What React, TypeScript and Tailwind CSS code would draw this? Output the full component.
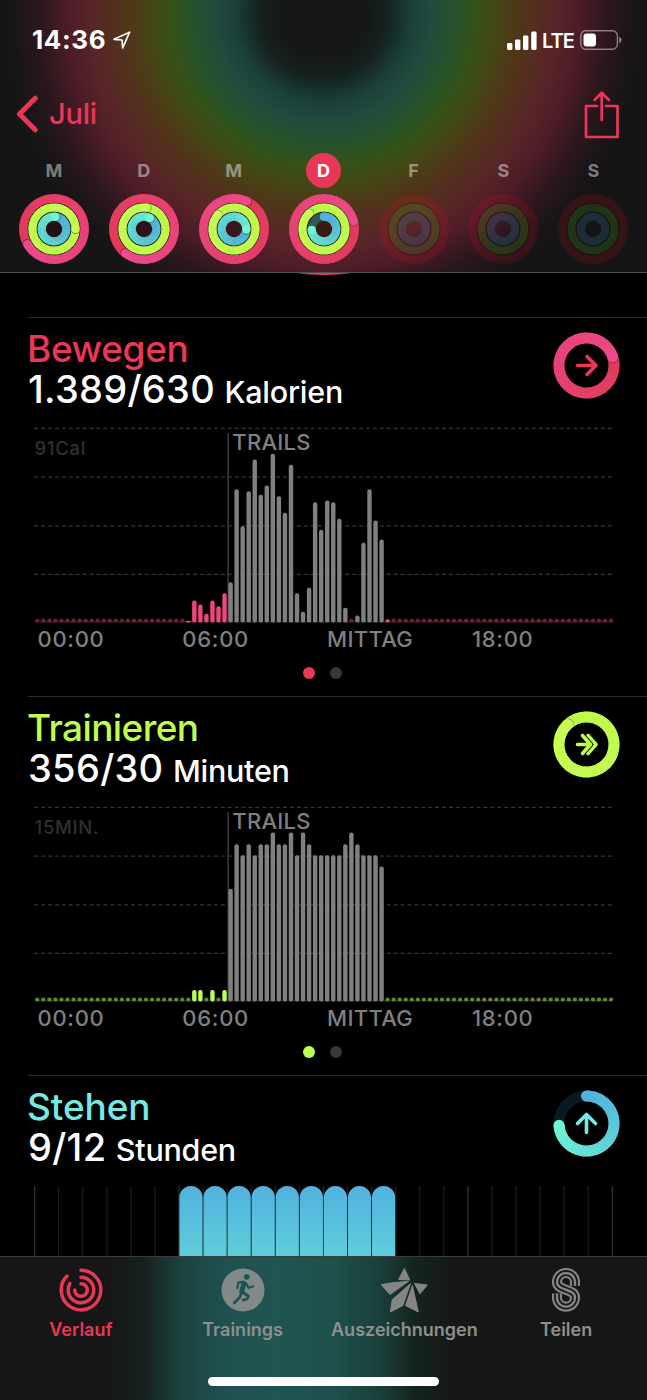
import type { ReactNode } from "react";

/* ---------- rings ---------- */

const MOVE = [[224, 58, 88], [237, 73, 140]];
const EXERCISE = [[190, 250, 75], [200, 255, 85]];
const STAND = [[82, 178, 223], [112, 245, 213]];

const mix = (colors: number[][], t: number) =>
  `rgb(${colors[0].map((c, i) => Math.round(c + (colors[1][i] - c) * t)).join(",")})`;

const point = (cx: number, cy: number, r: number, turn: number) => {
  const a = (turn - 0.25) * Math.PI * 2;
  return [cx + r * Math.cos(a), cy + r * Math.sin(a)];
};

type RingProps = { cx: number; cy: number; r: number; width: number; value: number; colors: number[][] };

const Ring = ({ cx, cy, r, width, value, colors }: RingProps) => {
  const steps = 90;
  const from = Math.max(0, value - 1);
  const span = value - from;
  const segments = Array.from({ length: steps }, (_, i) => {
    const a = from + (span * i) / steps;
    const b = from + (span * (i + 1)) / steps + (i < steps - 1 ? 0.004 : 0);
    const [x1, y1] = point(cx, cy, r, a);
    const [x2, y2] = point(cx, cy, r, b);
    return (
      <path
        key={i}
        d={`M${x1} ${y1}A${r} ${r} 0 0 1 ${x2} ${y2}`}
        stroke={mix(colors, i / steps)}
        strokeWidth={width}
        fill="none"
      />
    );
  });
  const [sx, sy] = point(cx, cy, r, from);
  const [dx, dy] = point(cx, cy, r, value + 1 / (2 * Math.PI * r));
  const [ex, ey] = point(cx, cy, r, value);
  return (
    <g>
      {value < 1 && <circle cx={sx} cy={sy} r={width / 2} fill={mix(colors, 0)} />}
      {segments}
      {value >= 1 && <circle cx={dx} cy={dy} r={width / 2 - 0.2} fill="#000" opacity={0.4} />}
      <circle cx={ex} cy={ey} r={width / 2} fill={mix(colors, 1)} />
    </g>
  );
};

const DayRings = ({ values }: { values: number[] | null }) => (
  <svg className="size-[70px]" viewBox="0 0 70 70">
    {values ? (
      <>
        <circle cx="35" cy="35" r="34" fill="#000" opacity="0.5" />
        <circle cx="35" cy="35" r="8.5" fill="#5a2028" opacity="0.35" />
        <Ring cx={35} cy={35} r={30.6} width={8.6} value={values[0]} colors={MOVE} />
        <Ring cx={35} cy={35} r={21.5} width={8.2} value={values[1]} colors={EXERCISE} />
        <circle cx="35" cy="35" r="12.3" stroke="#355653" strokeWidth="8.2" fill="none" />
        <Ring cx={35} cy={35} r={12.3} width={8.2} value={values[2]} colors={STAND} />
      </>
    ) : (
      <g fill="none">
        <circle cx="35" cy="35" r="30.6" stroke="#f0102a" strokeOpacity="0.15" strokeWidth="8.6" />
        <circle cx="35" cy="35" r="21.5" stroke="#55c015" strokeOpacity="0.18" strokeWidth="8.2" />
        <circle cx="35" cy="35" r="12.3" stroke="#3598c8" strokeOpacity="0.2" strokeWidth="8.2" />
        <circle cx="35" cy="35" r="17" stroke="#200010" strokeOpacity="0.35" strokeWidth="1.2" />
        <circle cx="35" cy="35" r="26" stroke="#200010" strokeOpacity="0.3" strokeWidth="1" />
      </g>
    )}
  </svg>
);

const days = [
  { label: "M", values: [1.667, 2.25, 1.02] },
  { label: "D", values: [1.605, 2.02, 1.08] },
  { label: "M", values: [2.07, 1.865, 1.26] },
  { label: "D", values: [2.21, 1.88, 0.74], selected: true },
  { label: "F", values: null },
  { label: "S", values: null },
  { label: "S", values: null },
];

/* ---------- header ---------- */

const StatusBar = () => (
  <div className="flex h-20 items-center justify-between pl-8 pr-[25px]">
    <div className="flex items-center gap-[7px]">
      <span className="text-[26px] font-bold leading-none tracking-[0.6px] text-white">14:36</span>
      <svg className="size-[18px]" viewBox="0 0 18 18">
        <path d="M1 8.3L16.6 1.2L9.7 16.9L9 9z" fill="none" stroke="#fff" strokeWidth="1.7" strokeLinejoin="round" />
      </svg>
    </div>
    <div className="flex items-center">
      <svg className="h-[19px] w-[30px]" viewBox="0 0 30 19" fill="#fff">
        <rect x="0" y="12" width="5.4" height="7" rx="1.4" />
        <rect x="8" y="8.5" width="5.4" height="10.5" rx="1.4" />
        <rect x="16" y="4.5" width="5.4" height="14.5" rx="1.4" />
        <rect x="24.2" y="0.5" width="5.4" height="18.5" rx="1.4" />
      </svg>
      <span className="ml-[5px] w-8 pt-px text-[20px] font-semibold leading-none tracking-[-1px] text-white">LTE</span>
      <svg className="ml-1.5 h-5 w-[42px]" viewBox="0 0 42 20">
        <rect x="0.8" y="0.8" width="36.6" height="18.4" rx="5" fill="none" stroke="#fff" strokeOpacity="0.45" strokeWidth="1.4" />
        <rect x="3.5" y="3.5" width="12.5" height="13" rx="3" fill="#fff" />
        <path d="M39.3 7c1.6 0.7 2.2 1.8 2.2 3s-0.6 2.3-2.2 3z" fill="#fff" fillOpacity="0.5" />
      </svg>
    </div>
  </div>
);

const NavBar = () => (
  <div className="flex h-[70px] items-center justify-between pb-[3px] pl-4 pr-[27px]">
    <div className="flex items-center text-[#ea3757]">
      <svg className="h-[38px] w-[22px]" viewBox="0 0 22 38">
        <path d="M19.2 3.2L3.5 19L19.2 34.8" fill="none" stroke="currentColor" strokeWidth="5" strokeLinecap="round" strokeLinejoin="round" />
      </svg>
      <span className="ml-[11px] text-[29px] font-medium leading-none tracking-[-0.2px]">Juli</span>
    </div>
    <svg className="mt-[2px] h-12 w-[36px]" viewBox="0 0 36 48" fill="none" stroke="#ea3757" strokeWidth="2.7" strokeLinecap="round" strokeLinejoin="round">
      <path d="M13 15H2V46H33.5V15H22" />
      <path d="M17.7 29V2M10.5 9L17.7 1.8L24.9 9" />
    </svg>
  </div>
);

const Header = () => (
  <header className="h-[273px] shrink-0 border-b border-[#505050] bg-[radial-gradient(circle_at_323px_14px,#151615_0px,#151615_40px,#14221f_64px,#1c3f3a_88px,#204a3d_106px,#27522b_132px,#345219_152px,#434814_170px,#50351a_197px,#582427_232px,#4c1c27_256px,#2b171d_284px,#171516_312px,#151515_330px)]">
    <StatusBar />
    <NavBar />
    <div className="grid grid-cols-[repeat(7,89.9px)] px-[9px]">
      {days.map((day, i) => (
        <div key={i} className="flex flex-col items-center">
          <div
            className={
              day.selected
                ? "mt-[3px] flex size-[35px] items-center justify-center rounded-full bg-[#ea3757] text-[18px] font-bold text-white"
                : "mt-[3px] flex size-[35px] items-center justify-center text-[18px] font-bold text-white/45"
            }
          >
            {day.label}
          </div>
          <div className="mt-[6px]">
            <DayRings values={day.values} />
          </div>
        </div>
      ))}
    </div>
  </header>
);

/* ---------- charts ---------- */

type Bar = [height: number, workout?: boolean];

const moveBars: Record<number, Bar> = {
  25: [1.7], 26: [22], 27: [18], 28: [8.7], 29: [22], 30: [16.3], 31: [29.3],
  32: [40.3, true], 33: [133.3, true], 34: [96.3, true], 35: [131.3, true], 36: [163, true],
  37: [127.7, true], 38: [137, true], 39: [168.7, true], 40: [126.3, true], 41: [109.7, true],
  42: [157.7, true], 43: [29.3, true], 44: [10.7, true], 45: [34.7, true], 46: [120.3, true],
  47: [92.7, true], 48: [122, true], 49: [120.3, true], 50: [103.7, true], 51: [14.7, true],
  53: [7, true], 54: [79.7, true], 55: [133.3, true], 56: [102, true], 57: [83, true], 58: [3.3],
};

const workoutMinutes = [
  112.7, 157.3, 146.3, 157.3, 146.3, 157.3, 157.3, 169, 157.3, 157.3, 169, 146.3, 169, 157.3,
  146.3, 146.3, 146.3, 146.3, 146.3, 157.3, 169, 157.3, 146.3, 146.3, 146.3, 135,
];

const exerciseBars: Record<number, Bar> = { 26: [11.5], 27: [11.5], 29: [11.5], 31: [11.5] };
workoutMinutes.forEach((h, i) => {
  exerciseBars[32 + i] = [h, true];
});

type ChartProps = { bars: Record<number, Bar>; color: string; dotColor: string; max: string };

const DayChart = ({ bars, color, dotColor, max }: ChartProps) => (
  <svg className="block h-[200px] w-[647px]" viewBox="0 0 647 200">
    {[5.4, 54.1, 102.8, 151.4].map((y) => (
      <line key={y} x1="34.3" x2="612" y1={y} y2={y} stroke="#363636" strokeWidth="1.3" strokeDasharray="4 2.91" />
    ))}
    <line x1="34.3" x2="612" y1="198.8" y2="198.8" stroke="#3a3a3a" strokeWidth="1" />
    <line x1="228.2" x2="228.2" y1="10" y2="199" stroke="#3c3c3c" strokeWidth="1.5" />
    <text x="34.5" y="31.5" fill="#303030" fontSize="18.5" fontWeight="500" letterSpacing="0.7">{max}</text>
    <text x="232.3" y="26.6" fill="#808080" fontSize="22" fontWeight="500" letterSpacing="0.25">TRAILS</text>
    {Array.from({ length: 96 }, (_, i) => {
      const cx = 37.3 + i * 6.04;
      const bar = bars[i];
      if (!bar) return <circle key={i} cx={cx} cy="197.5" r="2.1" fill={dotColor} />;
      const [h, workout] = bar;
      return (
        <rect key={i} x={cx - 2.2} y={199.5 - h} width="4.4" height={h} rx={Math.min(2, h / 2)} fill={workout ? "#808080" : color} />
      );
    })}
  </svg>
);

const AxisLabels = () => (
  <div className="grid h-8 grid-cols-[144.8px_144.8px_144.8px_auto] items-center pl-[37.5px] text-[22px] font-medium leading-none tracking-[0.7px] text-[#808080]">
    <span>00:00</span>
    <span>06:00</span>
    <span className="tracking-[0.3px]">MITTAG</span>
    <span>18:00</span>
  </div>
);

type SectionProps = {
  title: string;
  titleClass: string;
  amount: string;
  unit: string;
  ring: ReactNode;
  children: ReactNode;
};

const Section = ({ title, titleClass, amount, unit, ring, children }: SectionProps) => (
  <section className="h-[379px] shrink-0">
    <div className="ml-7 h-px bg-[#2b2b2b]" />
    <div className="flex h-[105px] justify-between pl-[27px] pr-[27px] pt-[14px]">
      <div className="-mt-[3px] font-medium">
        <h2 className={titleClass}>{title}</h2>
        <p className="ml-px text-[38px] leading-[41px] tracking-[0.3px] text-white">
          {amount} <span className="-ml-[1px] text-[30.5px] tracking-[-0.25px]">{unit}</span>
        </p>
      </div>
      <svg className="size-[67px]" viewBox="0 0 67 67" fill="none">
        {ring}
      </svg>
    </div>
    {children}
  </section>
);

const PageDots = ({ active }: { active: string }) => (
  <div className="mt-[12px] flex justify-center gap-[15px] pr-[2px]">
    <span className={active} />
    <span className="size-3 rounded-full bg-[#373737]" />
  </div>
);

const StandChart = () => (
  <svg className="mt-[5px] block h-[240px] w-[647px]" viewBox="0 0 647 240">
    <defs>
      <linearGradient id="stand" x1="0" y1="0" x2="0" y2="140" gradientUnits="userSpaceOnUse">
        <stop offset="0" stopColor="#52b2df" />
        <stop offset="0.5" stopColor="#5fcdd9" />
        <stop offset="1" stopColor="#6ee8d6" />
      </linearGradient>
    </defs>
    {Array.from({ length: 25 }, (_, i) => (
      <line key={i} x1={34.6 + i * 24.07} x2={34.6 + i * 24.07} y1="0" y2="240" stroke={i % 6 ? "#1c1c1c" : "#303030"} strokeWidth="1.3" />
    ))}
    {Array.from({ length: 9 }, (_, i) => {
      const x = 179.4 + i * 24.07;
      return <path key={i} d={`M${x} 240V11.5A11.6 11.5 0 0 1 ${x + 23.2} 11.5V240z`} fill="url(#stand)" />;
    })}
  </svg>
);

/* ---------- tab bar ---------- */

const HistoryIcon = () => (
  <svg className="size-11" viewBox="0 0 44 44" fill="none" stroke="#ea3757" strokeWidth="3.5" strokeLinecap="round">
    <path d="M22 2.2A19.8 19.8 0 1 1 8 8" />
    <path d="M22 9.2A12.8 12.8 0 1 1 10.9 15.6" />
    <path d="M22 15.7A6.3 6.3 0 1 1 15.7 22" />
  </svg>
);

const WorkoutIcon = () => (
  <svg className="size-11" viewBox="0 0 44 44">
    <circle cx="22" cy="22" r="21.5" fill="#818a89" />
    <circle cx="25.8" cy="9" r="2.8" fill="#1e5350" />
    <g fill="none" stroke="#1e5350" strokeLinecap="round" strokeLinejoin="round">
      <path d="M22.8 15.5L20.8 23.5" strokeWidth="5" />
      <path d="M22 13.7L17.4 14.6L16.2 20.2" strokeWidth="2.2" />
      <path d="M25.2 15.5L27.6 20L32.2 18.3" strokeWidth="2.2" />
      <path d="M20.5 25L18.6 29.5L13.2 35" strokeWidth="2.7" />
      <path d="M22 24.5L27.5 28L26 31L22 32" strokeWidth="2.7" />
    </g>
  </svg>
);

const AwardIcon = () => (
  <svg className="h-11 w-12 overflow-visible" viewBox="0 0 48 44" fill="#858585" stroke="#858585" strokeWidth="1" strokeLinejoin="round">
    <path d="M24.4 0.5L29.8 12L18.6 11.4z" />
    <path d="M1.2 16.6L14 14.6L28.500 13.300L10 26.5z" />
    <path d="M34.500 15.500L47.3 17L40 25.8z" />
    <path d="M30.500 15.600L22.8 37.5L10.4 44L12.2 31.8z" />
    <path d="M32.400 17.500L38.3 44L25.600 37.600z" />
  </svg>
);

const SharingIcon = () => {
  const d = "M23 18V14A9 9 0 0 0 5 14C5 23.5 23 20 23 29.7A9 9 0 0 1 5 29.7V25.5";
  return (
    <svg className="h-11 w-7" viewBox="0 0 28 44" fill="none">
      <path d={d} stroke="#858585" strokeWidth="10.2" />
      <path d={d} stroke="#161616" strokeWidth="5.8" />
      <path d={d} stroke="#858585" strokeWidth="2.4" />
    </svg>
  );
};

const TabBar = () => (
  <nav className="flex h-[144px] shrink-0 flex-col items-center border-t border-[#3a3d3d] bg-[linear-gradient(90deg,#161616_0px,#161616_105px,#15211f_145px,#1b413d_178px,#1f5150_225px,#205552_275px,#1f504b_335px,#1a3f3b_380px,#14241f_415px,#161817_450px,#161616_490px)]">
    <div className="grid w-full grid-cols-4 pt-[11px] text-center text-[18px] font-semibold leading-none text-[#8e8f8f]">
      <div className="flex flex-col items-center gap-[9px] text-[#ea3757]">
        <HistoryIcon />
        <span>Verlauf</span>
      </div>
      <div className="flex flex-col items-center gap-[9px]">
        <WorkoutIcon />
        <span>Trainings</span>
      </div>
      <div className="flex flex-col items-center gap-[9px]">
        <AwardIcon />
        <span>Auszeichnungen</span>
      </div>
      <div className="flex flex-col items-center gap-[9px]">
        <SharingIcon />
        <span>Teilen</span>
      </div>
    </div>
    <div className="mt-auto mb-[14px] h-[9px] w-[231px] rounded-full bg-white" />
  </nav>
);

const App = () => {
  return (
    <div className="flex h-[1400px] w-[647px] flex-col overflow-hidden bg-black font-['Inter','Liberation_Sans',sans-serif]">
      <Header />
      <main className="min-h-0 flex-1 overflow-hidden">
        {/* bottom edge of the large ring that is scrolled under the header */}
        <div className="flex h-11 items-start justify-center overflow-hidden">
          <div className="-mt-[386px] size-[388px] shrink-0 rounded-full bg-[#e8365f]" />
        </div>
        <Section
          title="Bewegen"
          titleClass="text-[37px] leading-[40px] tracking-[-0.4px] text-[#ea3757]"
          amount="1.389/630"
          unit="Kalorien"
          ring={
            <>
              <Ring cx={33.5} cy={33.5} r={27.5} width={11} value={2.2} colors={MOVE} />
              <path d="M24.5 33.5H42M34 24.5L43 33.5L34 42.5" stroke="#ea3757" strokeWidth="3.6" strokeLinecap="round" strokeLinejoin="round" />
            </>
          }
        >
          <DayChart bars={moveBars} color="#ed4580" dotColor="#82192f" max="91Cal" />
          <AxisLabels />
          <PageDots active="size-3 rounded-full bg-[#ea3757]" />
        </Section>
        <Section
          title="Trainieren"
          titleClass="text-[37px] leading-[40px] tracking-[-0.6px] text-[#bdff4f]"
          amount="356/30"
          unit="Minuten"
          ring={
            <>
              <Ring cx={33.5} cy={33.5} r={27.5} width={11} value={1.88} colors={EXERCISE} />
              <g stroke="#bdff4f" strokeWidth="3.6" strokeLinecap="round" strokeLinejoin="round">
                <path d="M35 24.5L43 33.5L35 42.5" />
                <path d="M29.5 24.5L37.5 33.5L29.5 42.5" stroke="#000" strokeWidth="5.4" />
                <path d="M24.5 33.5H37M29.5 24.5L37.5 33.5L29.5 42.5" />
              </g>
            </>
          }
        >
          <DayChart bars={exerciseBars} color="#bdff4f" dotColor="#648a22" max="15MIN." />
          <AxisLabels />
          <PageDots active="size-3 rounded-full bg-[#bdff4f]" />
        </Section>
        <Section
          title="Stehen"
          titleClass="text-[37px] leading-[40px] tracking-[-0.1px] text-[#77e8e4]"
          amount="9/12"
          unit="Stunden"
          ring={
            <>
              <circle cx="33.5" cy="33.5" r="27.5" stroke="#08191f" strokeWidth="11" />
              <Ring cx={33.5} cy={33.5} r={27.5} width={11} value={0.74} colors={STAND} />
              <path d="M33.5 42.5V25M24.5 33.5L33.5 24.5L42.5 33.5" stroke="#77e8e4" strokeWidth="3.6" strokeLinecap="round" strokeLinejoin="round" />
            </>
          }
        >
          <StandChart />
        </Section>
      </main>
      <TabBar />
    </div>
  );
};

export default App;
